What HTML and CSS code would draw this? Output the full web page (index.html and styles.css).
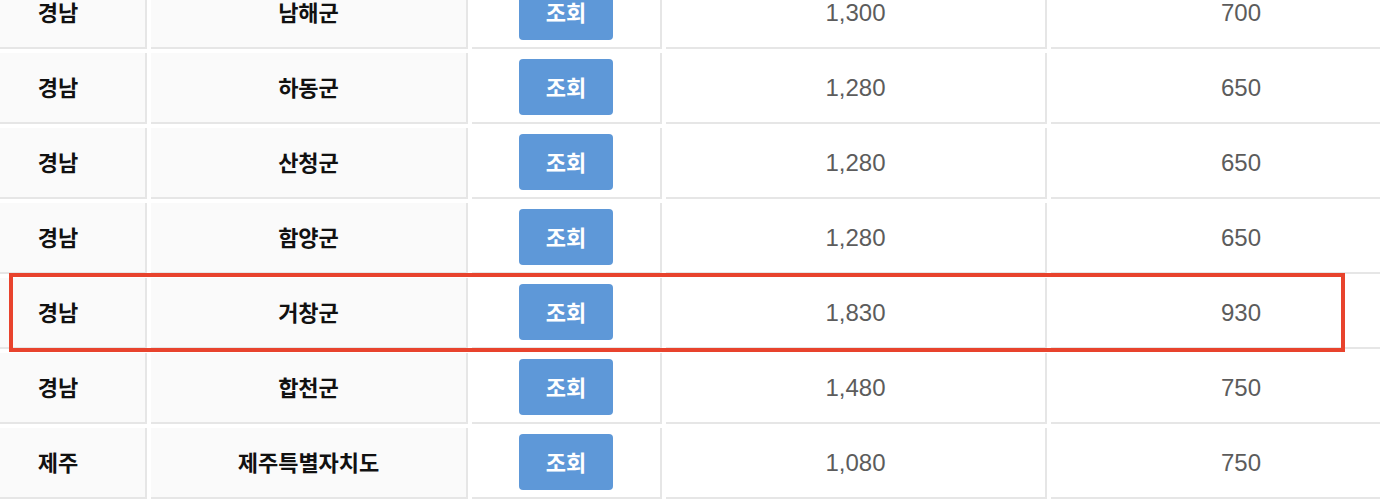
FILE: index.html
```html
<!DOCTYPE html>
<html lang="ko">
<head>
<meta charset="utf-8">
<title>지역별 조회</title>
<link rel="stylesheet" href="styles.css">
</head>
<body>
<div class="wrap">
  <table class="grid">
    <tbody>
      <tr><th class="c1">경남</th><th class="c2">남해군</th><td class="c3"><button class="btn">조회</button></td><td class="c4">1,300</td><td class="c5">700</td></tr>
      <tr><th class="c1">경남</th><th class="c2">하동군</th><td class="c3"><button class="btn">조회</button></td><td class="c4">1,280</td><td class="c5">650</td></tr>
      <tr><th class="c1">경남</th><th class="c2">산청군</th><td class="c3"><button class="btn">조회</button></td><td class="c4">1,280</td><td class="c5">650</td></tr>
      <tr><th class="c1">경남</th><th class="c2">함양군</th><td class="c3"><button class="btn">조회</button></td><td class="c4">1,280</td><td class="c5">650</td></tr>
      <tr><th class="c1">경남</th><th class="c2">거창군</th><td class="c3"><button class="btn">조회</button></td><td class="c4">1,830</td><td class="c5">930</td></tr>
      <tr><th class="c1">경남</th><th class="c2">합천군</th><td class="c3"><button class="btn">조회</button></td><td class="c4">1,480</td><td class="c5">750</td></tr>
      <tr><th class="c1">제주</th><th class="c2">제주특별자치도</th><td class="c3"><button class="btn">조회</button></td><td class="c4">1,080</td><td class="c5">750</td></tr>
    </tbody>
  </table>
  <div class="highlight"></div>
</div>
</body>
</html>
```
FILE: styles.css
```css
html, body {
  margin: 0;
  padding: 0;
  overflow: hidden;
  background: #ffffff;
}
.wrap {
  position: relative;
  display: flow-root;
  width: 1380px;
  height: 502px;
  overflow: hidden;
}
.grid {
  border-collapse: separate;
  border-spacing: 4px;
  table-layout: fixed;
  width: 1470px;
  margin: -26px 0 0 -33px;
  font-family: "Liberation Sans", "Noto Sans CJK KR", sans-serif;
}
.grid th,
.grid td {
  height: 69px;
  padding: 0;
  text-align: center;
  vertical-align: middle;
  border-right: 2px solid #e6e6e6;
  border-bottom: 2px solid #e6e6e6;
}
.grid th {
  height: 66px;
  padding-bottom: 3px;
  background: #fafafa;
  color: #111111;
  font-family: "Noto Sans CJK KR", sans-serif;
  font-size: 22px;
  font-weight: 700;
}
.grid td {
  background: #ffffff;
  color: #5c5c5c;
  font-size: 24px;
  font-weight: 400;
}
.c1 { width: 174px; }
.c2 { width: 315px; }
.c3 { width: 188px; }
.c4 { width: 379px; }
.c5 { width: 380px; }
.btn {
  display: inline-block;
  width: 94px;
  height: 56px;
  border: 0;
  border-radius: 4px;
  background: #5e98d8;
  color: #ffffff;
  font-family: "Noto Sans CJK KR", sans-serif;
  font-size: 22px;
  font-weight: 700;
  padding: 0 0 3px;
  margin-top: -1px;
  vertical-align: middle;
}
.highlight {
  position: absolute;
  left: 9px;
  top: 273px;
  width: 1336px;
  height: 79px;
  box-sizing: border-box;
  border: 4px solid #e8432d;
  pointer-events: none;
}
```
